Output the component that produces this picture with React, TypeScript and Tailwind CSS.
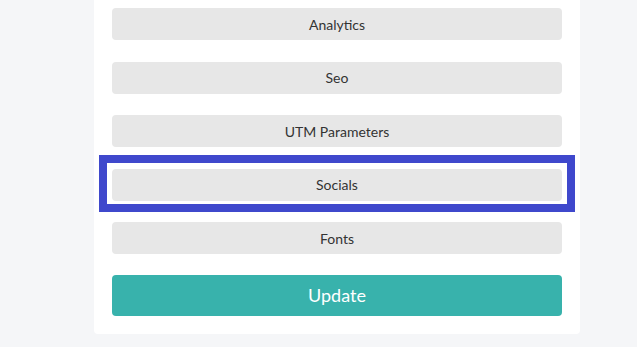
import React from 'react';

const sections = ['Analytics', 'Seo', 'UTM Parameters', 'Socials', 'Fonts'];

export default function App() {
  return (
    <div
      className="min-h-[347px] w-[637px] overflow-hidden bg-[#f5f6f8]"
      style={{ fontFamily: 'Lato, "Open Sans", sans-serif' }}
    >
      <div className="ml-[94px] mt-[-10px] w-[486px] rounded-b bg-white px-[18px] pt-[18px] pb-[18px]">
        <div className="flex flex-col gap-[21.5px]">
          {sections.map((s) => (
            <div key={s} className="relative">
              <button className="flex h-[32px] w-full items-center justify-center rounded bg-[#e7e7e7] text-[14px] text-[#333]">
                {s}
              </button>
              {s === 'Socials' && (
                <div className="pointer-events-none absolute left-[-13px] right-[-13px] top-[-14px] bottom-[-11px] border-[8px] border-[#3f48cc]" />
              )}
            </div>
          ))}
        </div>
        <button className="mt-[21px] flex h-[41px] w-full items-center justify-center rounded bg-[#38b2ac] text-[18px] text-white">
          Update
        </button>
      </div>
    </div>
  );
}
